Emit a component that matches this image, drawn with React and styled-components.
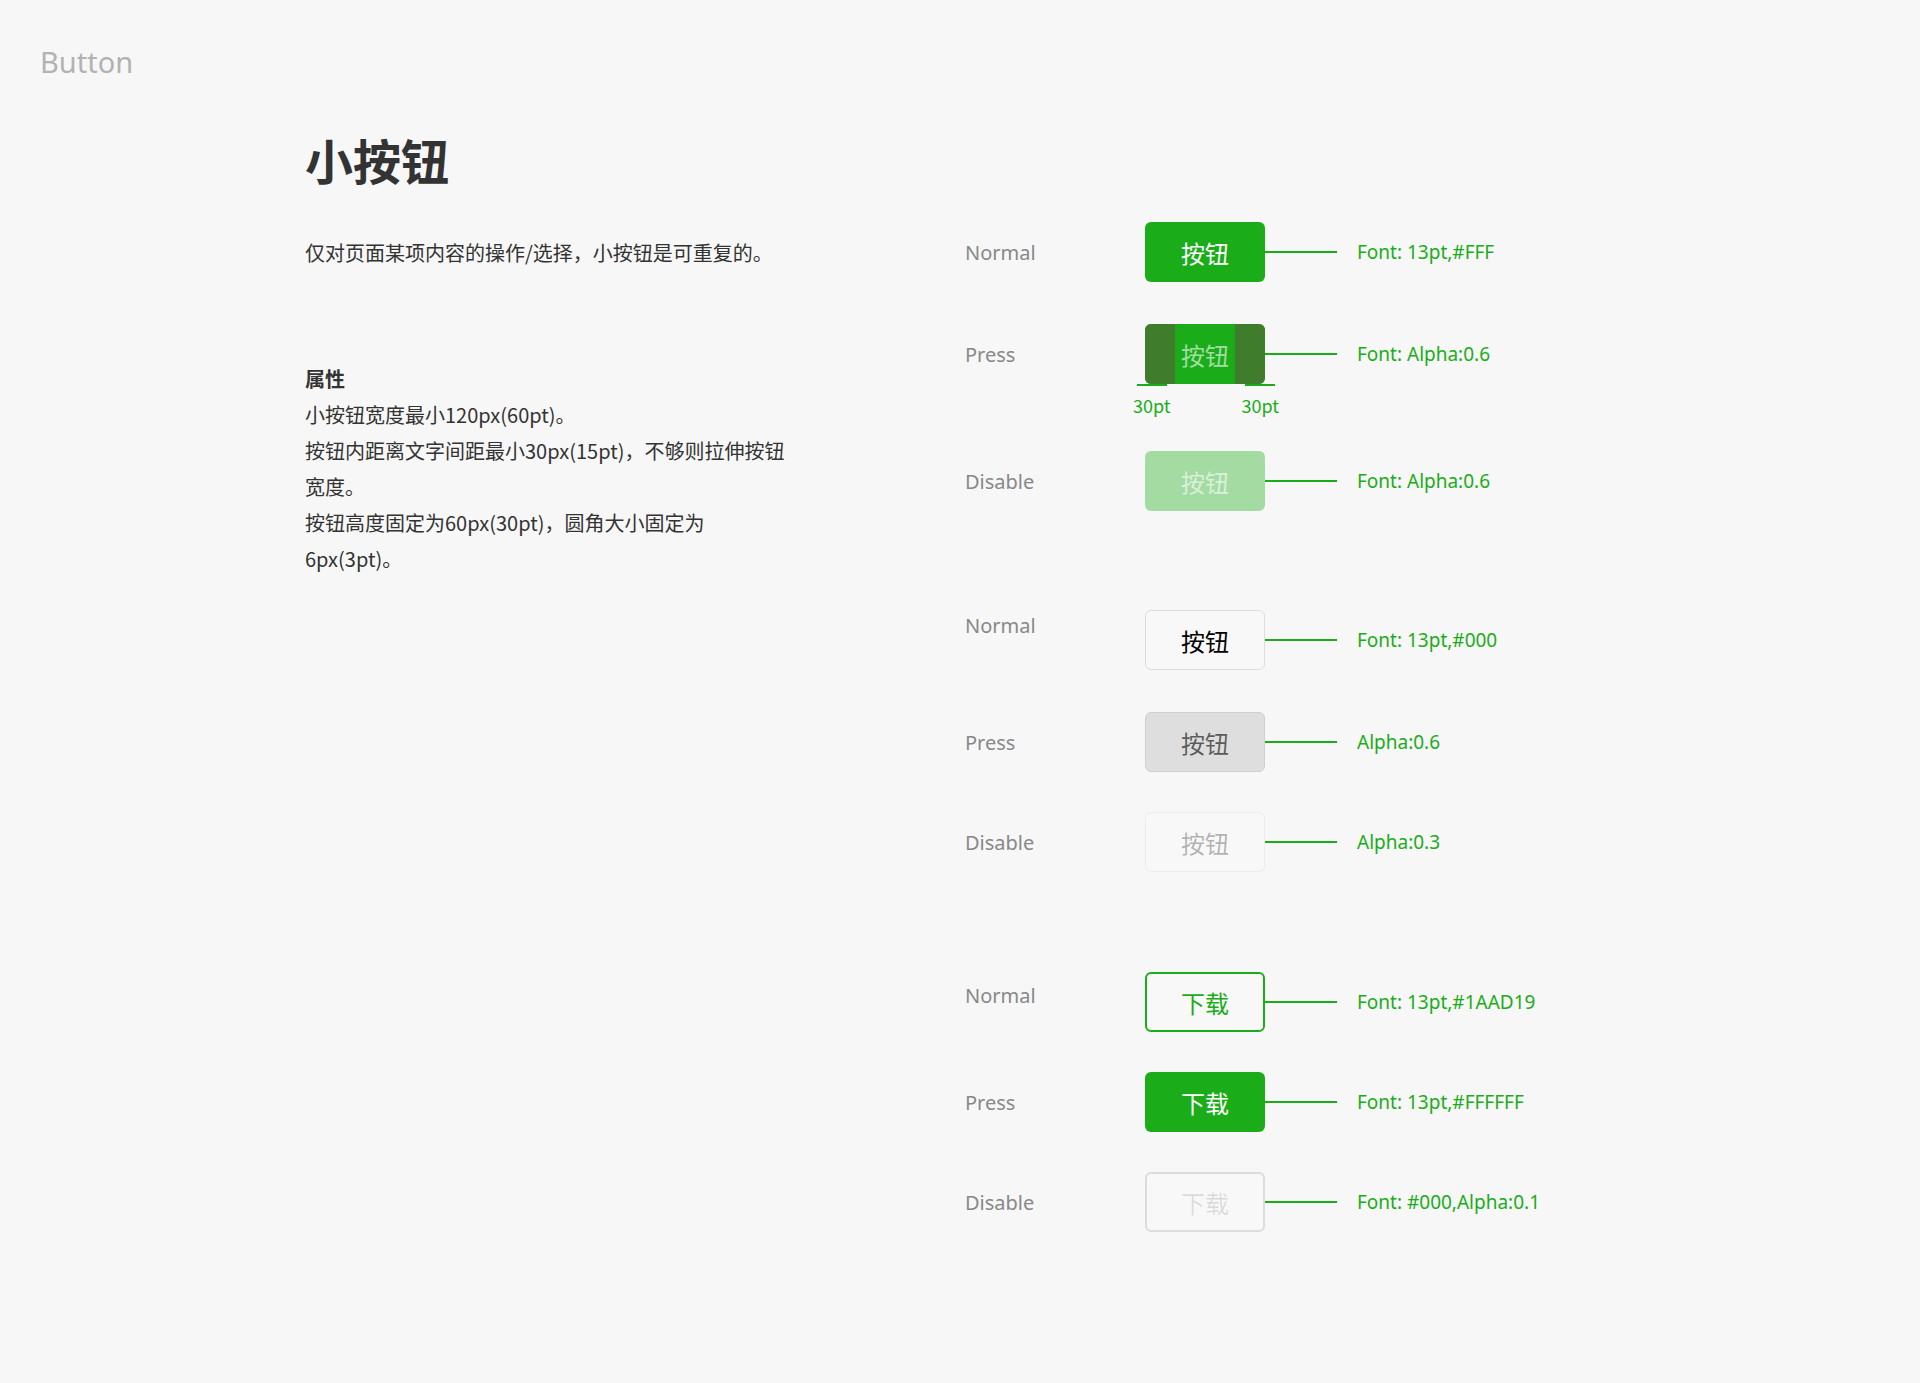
import React from "react";
import styled, { createGlobalStyle } from "styled-components";

const G = createGlobalStyle`
  body{margin:0;background:#f7f7f7;font-family:"Noto Sans","Noto Sans CJK SC",sans-serif;}
`;
const Page = styled.div`width:1920px;height:1383px;position:relative;`;
const Crumb = styled.div`position:absolute;left:40px;top:42px;font-size:29px;color:#b2b2b2;`;
const Main = styled.div`display:flex;padding:129px 0 0 305px;`;
const Left = styled.div`width:490px;`;
const Title = styled.h1`margin:0;font-size:48px;line-height:60px;font-weight:700;color:#333;font-family:"Noto Sans CJK SC",sans-serif;`;
const Para = styled.p`margin:${p=>p.$mt}px 0 0;font-size:20px;line-height:36px;color:#333;font-family:"Noto Sans CJK SC",sans-serif;`;
const Strong = styled.div`font-weight:700;`;
const Right = styled.div`margin-left:170px;padding-top:93px;display:flex;flex-direction:column;`;
const Row = styled.div`display:flex;align-items:center;height:60px;margin-top:${p=>p.$mt||0}px;`;
const Label = styled.div`width:180px;font-size:20px;color:#888;transform:translateY(${p=>p.$dy||0}px);`;
const Btn = styled.div`position:relative;width:120px;height:60px;box-sizing:border-box;border-radius:6px;display:flex;align-items:center;justify-content:center;font-size:24px;font-family:"Noto Sans CJK SC",sans-serif;
  background:${p=>p.$bg};color:${p=>p.$fg};border:${p=>p.$bd||"none"};`;
const Side = styled.div`position:absolute;top:0;bottom:0;width:30px;background:#3f7d2c;${p=>p.$r?"right:0;border-radius:0 6px 6px 0;":"left:0;border-radius:6px 0 0 6px;"}`;
const BtnText = styled.span`position:relative;`;
const Dim = styled.div`position:absolute;top:100%;${p=>p.$r?"right:-14px;":"left:-12px;"}display:flex;flex-direction:column;align-items:center;font-size:18px;color:#1aad19;`;
const Tick = styled.div`width:30px;height:2px;background:#1aad19;margin-bottom:6px;`;
const Line = styled.div`height:2px;background:#1aad19;width:${p=>p.$w}px;margin-left:${p=>p.$ml}px;`;
const Note = styled.div`margin-left:20px;font-size:19px;color:#1aad19;`;

const rows=[
 {l:"Normal",t:"按钮",bg:"#1aad19",fg:"#fff",n:"Font: 13pt,#FFF",mt:0},
 {l:"Press",t:"按钮",bg:"#1aad19",fg:"rgba(255,255,255,0.6)",n:"Font: Alpha:0.6",mt:42,press:true},
 {l:"Disable",t:"按钮",bg:"#a3dba3",fg:"rgba(255,255,255,0.6)",n:"Font: Alpha:0.6",mt:67,inset:15},
 {l:"Normal",t:"按钮",bg:"#f8f8f8",fg:"#000",bd:"1px solid #dcdcdc",n:"Font: 13pt,#000",mt:99,inset:15,dy:-15},
 {l:"Press",t:"按钮",bg:"#dedede",fg:"rgba(0,0,0,0.6)",bd:"1px solid #d0d0d0",n:"Alpha:0.6",mt:42,inset:15},
 {l:"Disable",t:"按钮",bg:"#f8f8f8",fg:"rgba(0,0,0,0.3)",bd:"1px solid #ececec",n:"Alpha:0.3",mt:40,inset:15},
 {l:"Normal",t:"下载",bg:"#f8f8f8",fg:"#1aad19",bd:"2px solid #1aad19",n:"Font: 13pt,#1AAD19",mt:100,inset:20,dy:-7},
 {l:"Press",t:"下载",bg:"#1aad19",fg:"#fff",n:"Font: 13pt,#FFFFFF",mt:40},
 {l:"Disable",t:"下载",bg:"#f8f8f8",fg:"rgba(0,0,0,0.12)",bd:"2px solid #dcdcdc",n:"Font: #000,Alpha:0.1",mt:40,inset:20},
];

export default function App(){
  return <Page><G/>
    <Crumb>Button</Crumb>
    <Main>
      <Left>
        <Title>小按钮</Title>
        <Para $mt={46}>仅对页面某项内容的操作/选择，小按钮是可重复的。</Para>
        <Para $mt={90}><Strong>属性</Strong>
          小按钮宽度最小120px(60pt)。<br/>
          按钮内距离文字间距最小30px(15pt)，不够则拉伸按钮宽度。<br/>
          按钮高度固定为60px(30pt)，圆角大小固定为6px(3pt)。
        </Para>
      </Left>
      <Right>
        {rows.map((r,i)=>(
          <Row key={i} $mt={r.mt}>
            <Label $dy={r.dy}>{r.l}</Label>
            <Btn $bg={r.bg} $fg={r.fg} $bd={r.bd}>
              {r.press&&<><Side/><Side $r/>
                <Dim><Tick/>30pt</Dim><Dim $r><Tick/>30pt</Dim></>}
              <BtnText>{r.t}</BtnText>
            </Btn>
            <Line $ml={-(r.inset||0)} $w={72+(r.inset||0)}/>
            <Note>{r.n}</Note>
          </Row>
        ))}
      </Right>
    </Main>
  </Page>;
}
